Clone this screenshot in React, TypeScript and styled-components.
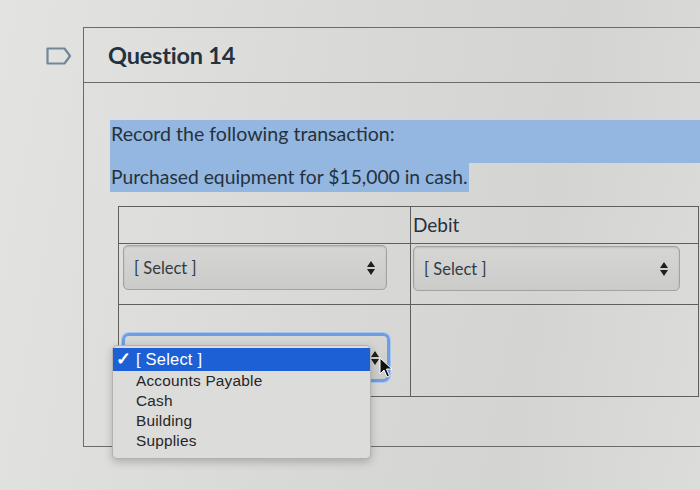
import styled, { createGlobalStyle } from "styled-components";

const GlobalStyle = createGlobalStyle`
  html, body {
    margin: 0;
    padding: 0;
  }
  body {
    width: 700px;
    height: 490px;
    overflow: hidden;
    background: linear-gradient(100deg, #e3e3e1 0%, #d9d9d7 45%, #d4d4d2 75%, #dcdcda 100%);
    font-family: 'Lato', 'Liberation Sans', sans-serif;
    color: #2d3b45;
  }
`;

const Page = styled.div`
  display: flex;
  padding-top: 27px;
  height: 463px;
`;

const Gutter = styled.div`
  width: 83px;
  flex-shrink: 0;
  padding: 19px 0 0 45px;
  box-sizing: border-box;
`;

const Panel = styled.div`
  flex: 1;
  align-self: flex-start;
  border-top: 1px solid #6b6b69;
  border-left: 1px solid #6b6b69;
  border-bottom: 1px solid #6b6b69;
`;

const Header = styled.div`
  height: 54px;
  display: flex;
  align-items: center;
  padding-left: 24px;
  border-bottom: 1px solid #6b6b69;
`;

const Title = styled.h2`
  margin: 0;
  font-family: 'Lato', sans-serif;
  font-size: 23.5px;
  font-weight: 700;
  color: #243240;
  letter-spacing: -0.2px;
`;

const Body = styled.div`
  padding: 37px 0 49px 26px;
`;

const Lead = styled.p`
  margin: 0;
  height: 43px;
  box-sizing: border-box;
  padding-left: 1px;
  font-size: 19.6px;
  line-height: 27px;
  background: #93b7e0;
  color: #27313d;
`;

const Prompt = styled.p`
  margin: 0;
  height: 29px;
  font-size: 19.3px;
`;

const Mark = styled.span`
  display: inline-block;
  line-height: 28px;
  padding: 0 2px 1px 1px;
  background: #93b7e0;
  color: #27313d;
`;

const Table = styled.div`
  margin: 14px 0 0 8px;
  width: 580px;
  display: grid;
  grid-template-columns: 292px 288px;
  grid-template-rows: 37px 61px 92px;
  border-top: 1px solid #5f5f5d;
  border-left: 1px solid #5f5f5d;
  box-sizing: content-box;
`;

const Cell = styled.div<{ $padTop?: number; $padLeft?: number }>`
  position: relative;
  border-right: 1px solid #5f5f5d;
  border-bottom: 1px solid #5f5f5d;
  padding-top: ${(p) => p.$padTop ?? 0}px;
  padding-left: ${(p) => p.$padLeft ?? 0}px;
`;

const HeadText = styled.div`
  font-size: 19px;
  line-height: 36px;
  color: #27313d;
`;

const SelectBox = styled.div<{ $width: number; $focused?: boolean }>`
  position: relative;
  width: ${(p) => p.$width}px;
  height: ${(p) => (p.$focused ? 49 : 45)}px;
  box-sizing: border-box;
  display: flex;
  align-items: center;
  justify-content: space-between;
  padding: 0 ${(p) => (p.$focused ? 8 : 11)}px 0 ${(p) => (p.$focused ? 8 : 10)}px;
  border-radius: ${(p) => (p.$focused ? 7 : 5)}px;
  border: ${(p) => (p.$focused ? "3px solid #6f9ce2" : "1px solid #a2a2a0")};
  background: linear-gradient(180deg, #d6d6d4 0%, #cbcbc9 100%);
  box-shadow: ${(p) =>
    p.$focused ? "0 0 0 1px #a9c4ec" : "inset 0 1px 2px rgba(0,0,0,0.12)"};
  font-size: 16.5px;
  color: #333b44;
`;

const Arrows = styled.span`
  display: flex;
  flex-direction: column;
  gap: 2px;
  &::before,
  &::after {
    content: "";
    width: 0;
    height: 0;
    border-left: 4px solid transparent;
    border-right: 4px solid transparent;
  }
  &::before {
    border-bottom: 6px solid #1e1e1e;
  }
  &::after {
    border-top: 6px solid #1e1e1e;
  }
`;

const Menu = styled.ul`
  position: absolute;
  left: -13px;
  top: 9px;
  width: 259px;
  margin: 0;
  padding: 2px 0 7px;
  list-style: none;
  box-sizing: border-box;
  background: #dcdcda;
  border: 1px solid #b2b2b0;
  border-radius: 5px;
  box-shadow: 0 3px 9px rgba(0, 0, 0, 0.22);
  font-family: 'Liberation Sans', 'Noto Sans', sans-serif;
  font-size: 15.4px;
  z-index: 2;
`;

const Option = styled.li<{ $active?: boolean }>`
  position: relative;
  height: ${(p) => (p.$active ? 23 : 20)}px;
  line-height: ${(p) => (p.$active ? 23 : 20)}px;
  padding-left: 23px;
  font-size: ${(p) => (p.$active ? 16.5 : 15.4)}px;
  color: ${(p) => (p.$active ? "#ffffff" : "#262626")};
  background: ${(p) => (p.$active ? "#1d5fd5" : "transparent")};
  letter-spacing: 0.2px;
`;

const Check = styled.span`
  position: absolute;
  left: 3px;
  top: 0;
  font-size: 18px;
  font-weight: 700;
`;

const Cursor = styled.svg`
  position: absolute;
  left: 254px;
  top: 21px;
  z-index: 3;
`;

const FlagIcon = () => (
  <svg width="28" height="20" viewBox="0 0 28 20">
    <path
      d="M2.5 2.5 H19.5 L25 10 L19.5 17.5 H2.5 Z"
      fill="none"
      stroke="#74879a"
      strokeWidth="2.2"
      strokeLinejoin="round"
    />
  </svg>
);

const Select = ({ width, focused }: { width: number; focused?: boolean }) => (
  <SelectBox $width={width} $focused={focused}>
    <span>{focused ? "" : "[ Select ]"}</span>
    <Arrows />
  </SelectBox>
);

const options = ["Accounts Payable", "Cash", "Building", "Supplies"];

export default function App() {
  return (
    <>
      <GlobalStyle />
      <Page>
        <Gutter>
          <FlagIcon />
        </Gutter>
        <Panel>
          <Header>
            <Title>Question 14</Title>
          </Header>
          <Body>
            <Lead>Record the following transaction:</Lead>
            <Prompt>
              <Mark>Purchased equipment for $15,000 in cash.</Mark>
            </Prompt>
            <Table>
              <Cell />
              <Cell $padLeft={2}>
                <HeadText>Debit</HeadText>
              </Cell>
              <Cell $padTop={1} $padLeft={4}>
                <Select width={264} />
              </Cell>
              <Cell $padTop={2} $padLeft={2}>
                <Select width={267} />
              </Cell>
              <Cell $padTop={28} $padLeft={3}>
                <SelectBox $width={268} $focused>
                  <span />
                  <Arrows />
                  <Menu>
                    <Option $active>
                      <Check>✓</Check>[ Select ]
                    </Option>
                    {options.map((o) => (
                      <Option key={o}>{o}</Option>
                    ))}
                  </Menu>
                  <Cursor width="14" height="22" viewBox="0 0 14 22">
                    <path
                      d="M1 1 L1 17 L5 13 L8 20 L10.5 19 L7.5 12 L13 12 Z"
                      fill="#111"
                      stroke="#fff"
                      strokeWidth="1"
                      strokeLinejoin="round"
                    />
                  </Cursor>
                </SelectBox>
              </Cell>
              <Cell />
            </Table>
          </Body>
        </Panel>
      </Page>
    </>
  );
}
